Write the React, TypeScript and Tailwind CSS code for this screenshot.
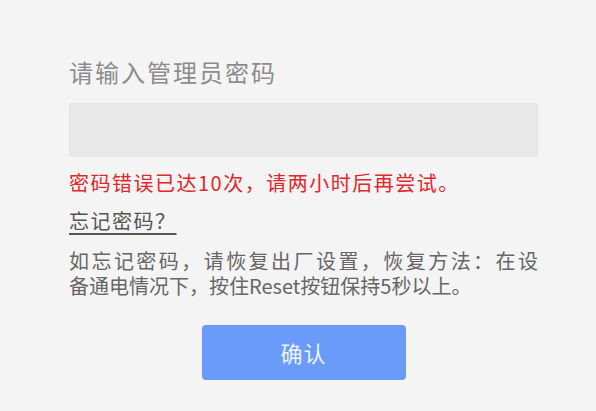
export default function App() {
  return (
    <div className="min-h-[411px] bg-[#f4f4f4] font-['Noto_Sans_CJK_SC','Noto_Sans',sans-serif]">
      <div className="ml-[69px] w-[469px] pt-[55px]">
        <h1 className="text-[24px] leading-[34px] tracking-[2px] text-[#8c8c8c]">
          请输入管理员密码
        </h1>

        <div className="mt-[14px] h-[54px] rounded-[3px] border border-[#e3e3e3] bg-[#e8e8e8]" />

        <p className="mt-[14px] text-[20px] leading-[24px] tracking-[1.5px] text-[#e3262c]">
          密码错误已达10次，请两小时后再尝试。
        </p>

        <a className="mt-[14px] inline-block text-[20px] leading-[24px] tracking-[1.5px] text-[#555] underline underline-offset-[4px] decoration-[#555]">
          忘记密码？
        </a>

        {/* recovery hint, first line spread to full width */}
        <p className="mt-[14px] text-[20px] leading-[25px] text-[#666]">
          <span className="block [text-align-last:justify]">
            如忘记密码，请恢复出厂设置，恢复方法：在设
          </span>
          <span className="block">备通电情况下，按住Reset按钮保持5秒以上。</span>
        </p>

        <div className="mt-[27px] flex justify-center">
          <button className="h-[55px] w-[204px] rounded-[4px] bg-[#6a9bfb] text-[22px] tracking-[1px] text-[#eef3ff]">
            确认
          </button>
        </div>
      </div>
    </div>
  );
}
